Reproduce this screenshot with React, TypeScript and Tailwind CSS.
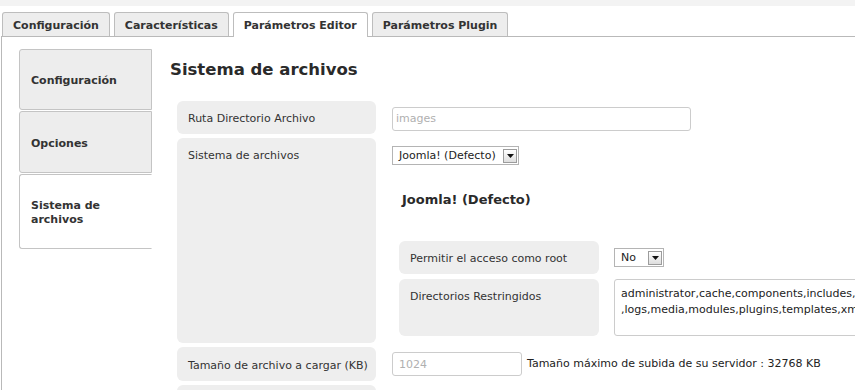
import type { ReactNode } from "react";

const tabs = ["Configuración", "Características", "Parámetros Editor", "Parámetros Plugin"];

function Arrow() {
	return (
		<span className="ml-auto mr-px mb-px flex h-[14px] w-[14px] items-center justify-center self-end border border-[#9c9c9c] bg-linear-to-b from-white to-[#dedede]">
			<svg width="7" height="4" viewBox="0 0 7 4">
				<path d="M0 0h7L3.5 4z" fill="#111" />
			</svg>
		</span>
	);
}

function Select({ value, width }: { value: string; width: string }) {
	return (
		<div className={`flex h-[19px] items-stretch border border-[#b4b4b4] bg-white ${width}`}>
			<span className="self-center pl-[6px] text-[11px] leading-[14px] text-[#222]">{value}</span>
			<Arrow />
		</div>
	);
}

function Label({ children, className = "" }: { children?: ReactNode; className?: string }) {
	return (
		<div className={`shrink-0 rounded-[6px] bg-[#eeeeee] pl-[11px] pt-[11px] text-[11px] leading-[14px] ${className}`}>
			{children}
		</div>
	);
}

export default function App() {
	return (
		<div className="h-[390px] w-full overflow-hidden bg-white font-['DejaVu_Sans',Verdana,sans-serif] text-[#333]">
			<div className="h-[6px] bg-[#f3f3f3]" />

			{/* horizontal tabs */}
			<div className="flex h-[30px] items-end gap-[4px] pl-[2px]">
				{tabs.map((t) => {
					const active = t === "Parámetros Editor";
					return (
						<div
							key={t}
							className={`flex items-center rounded-t-[3px] border border-b-0 border-[#bdbdbd] px-[10px] pt-[2px] text-[11px] font-bold leading-[14px] ${
								active ? "relative z-10 -mb-px h-[25px] bg-white pb-px" : "h-[24px] bg-[#ededed]"
							}`}
						>
							{t}
						</div>
					);
				})}
			</div>

			{/* panel */}
			<div className="ml-px flex h-[400px] border-l border-t border-[#b9b9b9]">
				{/* vertical tabs */}
				<div className="flex w-[150px] shrink-0 flex-col gap-[2px] pl-[17px] pt-[12px]">
					<div className="flex h-[61px] items-center rounded-l-[3px] border border-[#c4c4c4] bg-[#ededed] pl-[11px] pt-[2px] text-[11px] font-bold leading-[14px]">
						Configuración
					</div>
					<div className="-mt-px flex h-[62px] items-center rounded-l-[3px] border border-[#c4c4c4] bg-[#ededed] pl-[11px] pt-[3px] text-[11px] font-bold leading-[14px]">
						Opciones
					</div>
					<div className="-mt-px flex h-[75px] items-center rounded-l-[3px] border border-[#c4c4c4] border-r-transparent bg-white pl-[11px] pr-[20px] pt-[2px] text-[11px] font-bold leading-[14px]">
						Sistema de archivos
					</div>
				</div>

				{/* main */}
				<div className="ml-[18px] pt-[23px]">
					<h2 className="text-[16.5px] font-bold leading-[20px] text-[#2a2a2a]">Sistema de archivos</h2>

					<div className="ml-[7px] mt-[21px] flex flex-col gap-[4px]">
						<div className="flex h-[33px] gap-[16px]">
							<Label className="w-[199px]">Ruta Directorio Archivo</Label>
							<div className="pt-[4px]">
								<input
									readOnly
									placeholder="images"
									className="h-[24px] w-[299px] rounded-[3px] border border-[#cccccc] pl-[3px] text-[11px] outline-none placeholder:text-[#b0b0b0]"
								/>
							</div>
						</div>

						<div className="flex gap-[16px]">
							<Label className="w-[199px]">Sistema de archivos</Label>
							<div className="pb-[7px] pt-[8px]">
								<Select value="Joomla! (Defecto)" width="w-[127px]" />
								<div className="ml-[10px] mt-[27px] text-[13px] font-bold leading-[16px] text-[#2a2a2a]">
									Joomla! (Defecto)
								</div>
								<div className="ml-[7px] mt-[33px] flex flex-col gap-[5px]">
									<div className="flex h-[33px] gap-[15px]">
										<Label className="w-[200px]">Permitir el acceso como root</Label>
										<div className="pt-[7px]">
											<Select value="No" width="w-[50px]" />
										</div>
									</div>
									<div className="flex h-[57px] gap-[15px]">
										<Label className="w-[200px]">Directorios Restringidos</Label>
										<div className="h-[57px] w-[420px] overflow-hidden whitespace-pre rounded-[3px] border border-[#cccccc] px-[6px] pt-[6px] text-[11px] leading-[16px] text-[#222]">
											{"administrator,cache,components,includes,installation,language,libraries\n,logs,media,modules,plugins,templates,xmlrpc"}
										</div>
									</div>
								</div>
							</div>
						</div>

						<div className="flex h-[34px] gap-[16px]">
							<Label className="w-[199px] pt-[12px]">Tamaño de archivo a cargar (KB)</Label>
							<div className="flex items-start gap-[5px] pt-[5px]">
								<input
									readOnly
									placeholder="1024"
									className="h-[24px] w-[130px] rounded-[3px] border border-[#cccccc] pl-[6px] text-[11px] outline-none placeholder:text-[#b0b0b0]"
								/>
								<span className="pt-[5px] text-[11px] leading-[14px] text-[#222]">
									Tamaño máximo de subida de su servidor : 32768 KB
								</span>
							</div>
						</div>

						<div className="flex h-[33px] gap-[16px]">
							<Label className="w-[199px]" />
						</div>
					</div>
				</div>
			</div>
		</div>
	);
}
